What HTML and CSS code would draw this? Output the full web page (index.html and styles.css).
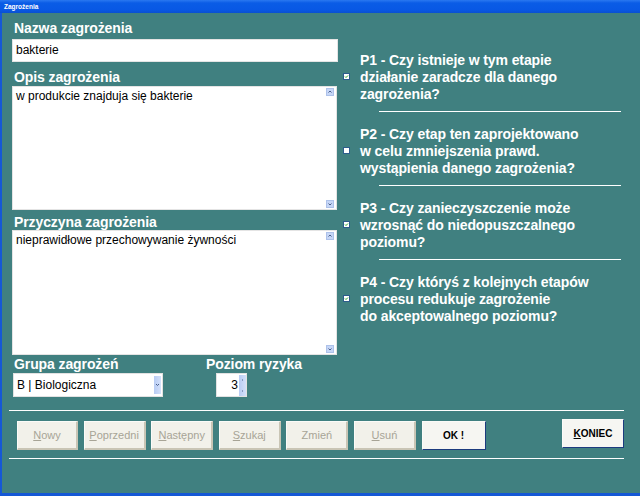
FILE: index.html
```html
<!DOCTYPE html>
<html lang="pl">
<head>
<meta charset="utf-8">
<title>Zagrożenia</title>
<link rel="stylesheet" href="styles.css">
</head>
<body>
<div class="window">
  <div class="titlebar"><span class="title">Zagrożenia</span></div>
  <div class="client">
    <div class="main">
      <div class="left">
        <div class="label">Nazwa zagrożenia</div>
        <div class="input">bakterie</div>
        <div class="label l-opis">Opis zagrożenia</div>
        <div class="memo memo-opis">
          <div class="memo-text">w produkcie znajduja się bakterie</div>
          <div class="scroll">
            <svg class="arrow" width="8" height="8" viewBox="0 0 8 8"><rect x="0.5" y="0.5" width="7" height="7" fill="#c6d6f6" stroke="#aec2ea"/><path d="M2.5 4.5 L4 3 L5.5 4.5" fill="none" stroke="#4a5f8a" stroke-width="1"/></svg>
            <svg class="arrow" width="8" height="8" viewBox="0 0 8 8"><rect x="0.5" y="0.5" width="7" height="7" fill="#c6d6f6" stroke="#aec2ea"/><path d="M2.5 3.5 L4 5 L5.5 3.5" fill="none" stroke="#4a5f8a" stroke-width="1"/></svg>
          </div>
        </div>
        <div class="label l-przyczyna">Przyczyna zagrożenia</div>
        <div class="memo memo-przyczyna">
          <div class="memo-text">nieprawidłowe przechowywanie żywności</div>
          <div class="scroll">
            <svg class="arrow" width="8" height="8" viewBox="0 0 8 8"><rect x="0.5" y="0.5" width="7" height="7" fill="#c6d6f6" stroke="#aec2ea"/><path d="M2.5 4.5 L4 3 L5.5 4.5" fill="none" stroke="#4a5f8a" stroke-width="1"/></svg>
            <svg class="arrow" width="8" height="8" viewBox="0 0 8 8"><rect x="0.5" y="0.5" width="7" height="7" fill="#c6d6f6" stroke="#aec2ea"/><path d="M2.5 3.5 L4 5 L5.5 3.5" fill="none" stroke="#4a5f8a" stroke-width="1"/></svg>
          </div>
        </div>
        <div class="bottom-fields">
          <div class="field-group">
            <div class="label">Grupa zagrożeń</div>
            <div class="select">
              <span class="select-text">B | Biologiczna</span>
              <span class="drop-btn"><svg width="7" height="18" viewBox="0 0 7 18"><path d="M2 8 L3.5 9.5 L5 8" fill="none" stroke="#4a5f8a" stroke-width="1"/></svg></span>
            </div>
          </div>
          <div class="field-risk">
            <div class="label">Poziom ryzyka</div>
            <div class="spinner">
              <span class="spin-value">3</span>
              <span class="spin-btn"><svg width="7" height="21" viewBox="0 0 7 21"><path d="M3 5 H4 M3 16 H4" stroke="#4a5f8a" stroke-width="1"/></svg></span>
            </div>
          </div>
        </div>
      </div>
      <div class="right">
        <div class="question">
          <svg class="check" width="7" height="7" viewBox="0 0 7 7"><rect x="0.5" y="0.5" width="6" height="6" fill="#ffffff" stroke="#2d5d8c"/><path d="M2 3.5 L3 4.5 L5 2.5" fill="none" stroke="#22a322" stroke-width="1"/></svg>
          <div class="q-text">P1 - Czy istnieje w tym etapie<br>działanie zaradcze dla danego<br>zagrożenia?</div>
        </div>
        <div class="q-sep"></div>
        <div class="question">
          <svg class="check" width="7" height="7" viewBox="0 0 7 7"><rect x="0.5" y="0.5" width="6" height="6" fill="#ffffff" stroke="#2d5d8c"/></svg>
          <div class="q-text">P2 - Czy etap ten zaprojektowano<br>w celu zmniejszenia prawd.<br>wystąpienia danego zagrożenia?</div>
        </div>
        <div class="q-sep"></div>
        <div class="question">
          <svg class="check" width="7" height="7" viewBox="0 0 7 7"><rect x="0.5" y="0.5" width="6" height="6" fill="#ffffff" stroke="#2d5d8c"/><path d="M2 3.5 L3 4.5 L5 2.5" fill="none" stroke="#22a322" stroke-width="1"/></svg>
          <div class="q-text">P3 - Czy zanieczyszczenie może<br>wzrosnąć do niedopuszczalnego<br>poziomu?</div>
        </div>
        <div class="q-sep"></div>
        <div class="question">
          <svg class="check" width="7" height="7" viewBox="0 0 7 7"><rect x="0.5" y="0.5" width="6" height="6" fill="#ffffff" stroke="#2d5d8c"/><path d="M2 3.5 L3 4.5 L5 2.5" fill="none" stroke="#22a322" stroke-width="1"/></svg>
          <div class="q-text">P4 - Czy któryś z kolejnych etapów<br>procesu redukuje zagrożenie<br>do akceptowalnego poziomu?</div>
        </div>
      </div>
    </div>
    <div class="hline hline-top"></div>
    <div class="buttons">
      <div class="btn disabled btn-first"><u>N</u>owy</div>
      <div class="btn disabled"><u>P</u>oprzedni</div>
      <div class="btn disabled"><u>N</u>astępny</div>
      <div class="btn disabled"><u>S</u>zukaj</div>
      <div class="btn disabled">Zmień</div>
      <div class="btn disabled"><u>U</u>suń</div>
      <div class="btn default btn-ok">OK !</div>
      <div class="btn default btn-end"><u>K</u>ONIEC</div>
    </div>
    <div class="hline hline-bottom"></div>
  </div>
</div>
</body>
</html>
```

FILE: styles.css
```css
* { box-sizing: border-box; }

html, body {
  margin: 0;
  padding: 0;
  background: #408080;
}

body {
  font-family: "Liberation Sans", Arial, sans-serif;
  color: #000;
}

.window {
  width: 640px;
  height: 496px;
  background: #408080;
  border-left: 2px solid #1558d6;
  border-bottom: 3px solid #1558d6;
  display: flex;
  flex-direction: column;
}

.titlebar {
  height: 13px;
  margin-left: -2px;
  background: linear-gradient(to bottom, #2a78f0 0px, #0a5ce6 3px, #0858e4 10px, #0a50d0 13px);
  display: flex;
  align-items: center;
  padding-left: 4px;
}

.title {
  color: #fff;
  font-size: 6.5px;
  font-weight: bold;
  line-height: 8px;
}

.client {
  flex: 1;
  display: flex;
  flex-direction: column;
}

.main {
  display: flex;
  padding: 7px 0 0 10px;
  gap: 5px;
}

.left {
  width: 326px;
  display: flex;
  flex-direction: column;
}

.label {
  color: #fff;
  font-weight: bold;
  font-size: 14px;
  letter-spacing: -0.1px;
  line-height: 16px;
  padding-left: 2px;
  white-space: nowrap;
}

.input {
  margin-top: 3px;
  height: 23px;
  background: #fff;
  border: 1px solid #e4e4e4;
  font-size: 12px;
  line-height: 15px;
  padding: 3px 3px;
}

.l-opis { margin-top: 7px; }
.l-przyczyna { margin-top: 4px; }

.memo {
  margin-top: 1px;
  background: #fff;
  border: 1px solid #e4e4e4;
  display: flex;
}

.memo-opis { height: 124px; margin-right: 1px; }
.memo-przyczyna { height: 125px; margin-top: 0; margin-right: 1px; }

.memo-text {
  flex: 1;
  font-size: 12px;
  line-height: 14px;
  padding: 2px 3px;
}

.scroll {
  width: 10px;
  display: flex;
  flex-direction: column;
  justify-content: space-between;
  padding: 1px 1px 1px 0;
}

.arrow { display: block; }

.bottom-fields {
  margin-top: 1px;
  display: flex;
}

.field-group {
  width: 192px;
}

.select {
  margin-top: 1px;
  margin-left: 1px;
  width: 150px;
  height: 24px;
  background: #fff;
  border: 1px solid #e2e2e2;
  display: flex;
  align-items: center;
  padding: 0 1px 0 3px;
}

.select-text {
  flex: 1;
  font-size: 12px;
}

.drop-btn {
  width: 7px;
  height: 18px;
  background: linear-gradient(to right, #b8ccf4, #d4e0fa);
  display: flex;
}

.field-risk {
  display: flex;
  flex-direction: column;
}

.spinner {
  margin-top: 1px;
  margin-left: 12px;
  width: 31px;
  height: 24px;
  background: #fff;
  border: 1px solid #e2e2e2;
  display: flex;
  align-items: center;
  padding: 0 0 0 2px;
}

.spin-value {
  flex: 1;
  text-align: right;
  font-size: 12px;
  padding-right: 1px;
}

.spin-btn {
  width: 7px;
  height: 21px;
  background: linear-gradient(to right, #b8ccf4, #d4e0fa);
  display: flex;
}

.right {
  padding-top: 32px;
  display: flex;
  flex-direction: column;
}

.question {
  display: flex;
  align-items: center;
  gap: 10px;
}

.check { display: block; flex: none; margin-top: -3px; }

.q-text {
  color: #fff;
  font-weight: bold;
  font-size: 14px;
  letter-spacing: -0.1px;
  line-height: 17px;
  white-space: nowrap;
}

.q-sep {
  margin: 8px 0 14px 36px;
  width: 242px;
  height: 1px;
  background: #fff;
}

.hline {
  height: 1px;
  background: #fff;
  margin-left: 7px;
  width: 615px;
}

.hline-top { margin-top: 13px; }
.hline-bottom { margin-top: 8px; }

.buttons {
  display: flex;
  align-items: flex-start;
  padding-left: 15px;
  padding-right: 16px;
  margin-top: 10px;
  gap: 5.6px;
}

.btn {
  width: 62px;
  height: 29px;
  background: #f2f1ea;
  border-top: 1px solid #fbfbf8;
  border-left: 1px solid #fbfbf8;
  border-right: 2px solid #c9c5b5;
  border-bottom: 2px solid #c9c5b5;
  font-size: 11px;
  display: flex;
  align-items: center;
  justify-content: center;
  white-space: nowrap;
}

.btn-first { width: 61px; }

.btn u { text-decoration: underline; }

.disabled {
  color: #a7a496;
}

.default {
  background: #f6f6f2;
  border-right: 1px solid #1c3b7e;
  border-bottom: 1px solid #1c3b7e;
  font-weight: bold;
  font-size: 10px;
  color: #000;
}

.btn-ok {
  width: 64px;
}

.btn-end {
  margin-left: auto;
  margin-top: -2px;
}
```
